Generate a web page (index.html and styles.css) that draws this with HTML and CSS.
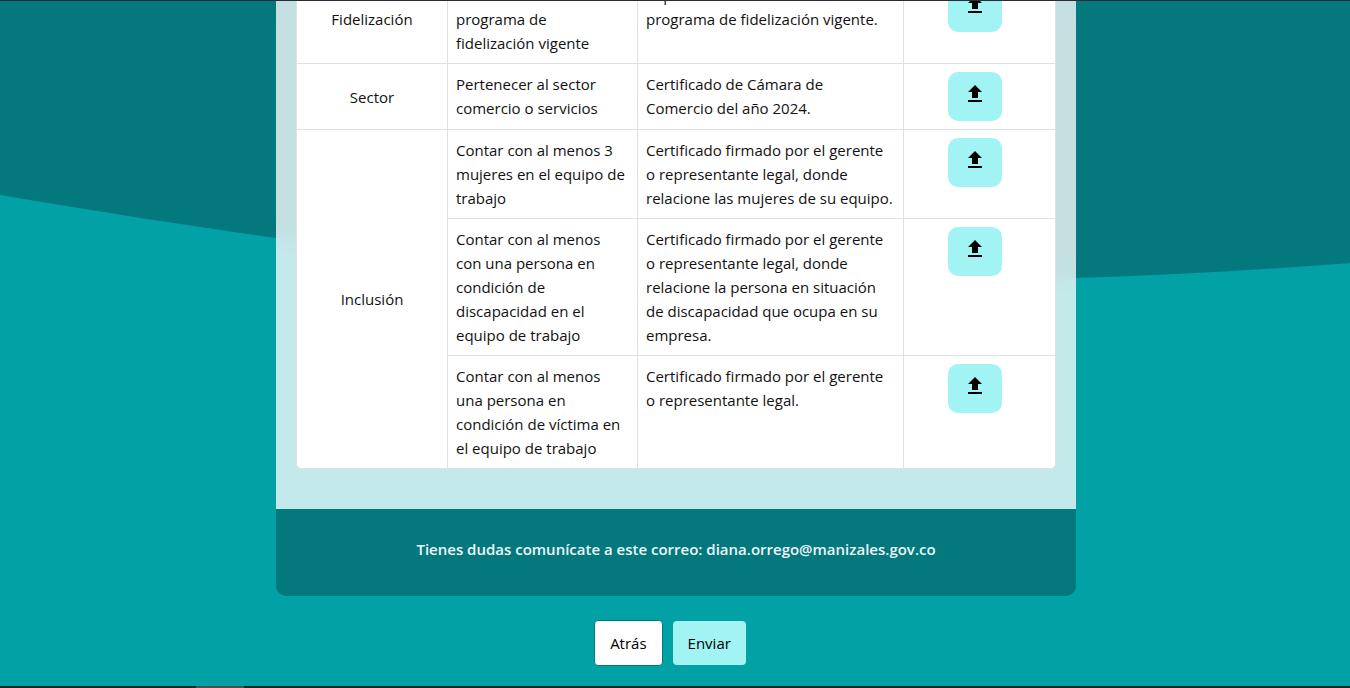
FILE: index.html
```html
<!DOCTYPE html>
<html lang="es">
<head>
<meta charset="utf-8">
<meta name="viewport" content="width=device-width, initial-scale=1">
<title>Requisitos</title>
<link rel="stylesheet" href="styles.css">
</head>
<body>
<svg class="wave" viewBox="0 0 1350 300" preserveAspectRatio="none" aria-hidden="true">
  <path fill="#03787d" d="M0 0H1350V263C1260 270 1170 275 1076 278C860 290 560 281 276 238C190 226 100 212 0 195Z"/>
</svg>
<svg class="defs" aria-hidden="true">
  <symbol id="upload" viewBox="0 0 24 24"><path d="M5 20h14v-2H5v2zm0-4zM9 16h6v-6h4l-7-7-7 7h4z"/></symbol>
</svg>
<main class="view">
  <form class="form">
    <section class="card">
      <div class="card-body">
        <div class="table-frame">
          <table class="reqs">
            <colgroup><col class="c-name"><col class="c-req"><col class="c-doc"><col class="c-file"></colgroup>
            <tbody>
              <tr>
                <th scope="row">Fidelización</th>
                <td>Contar con un<br>programa de<br>fidelización vigente</td>
                <td>Soporte del<br>programa de fidelización vigente.</td>
                <td class="file"><button type="button" class="upload" aria-label="Subir archivo"><svg class="icon"><use href="#upload"/></svg></button></td>
              </tr>
              <tr>
                <th scope="row">Sector</th>
                <td>Pertenecer al sector<br>comercio o servicios</td>
                <td>Certificado de Cámara de<br>Comercio del año 2024.</td>
                <td class="file"><button type="button" class="upload" aria-label="Subir archivo"><svg class="icon"><use href="#upload"/></svg></button></td>
              </tr>
              <tr>
                <th scope="rowgroup" rowspan="3">Inclusión</th>
                <td>Contar con al menos 3<br>mujeres en el equipo de<br>trabajo</td>
                <td>Certificado firmado por el gerente<br>o representante legal, donde<br>relacione las mujeres de su equipo.</td>
                <td class="file"><button type="button" class="upload" aria-label="Subir archivo"><svg class="icon"><use href="#upload"/></svg></button></td>
              </tr>
              <tr>
                <td>Contar con al menos<br>con una persona en<br>condición de<br>discapacidad en el<br>equipo de trabajo</td>
                <td>Certificado firmado por el gerente<br>o representante legal, donde<br>relacione la persona en situación<br>de discapacidad que ocupa en su<br>empresa.</td>
                <td class="file"><button type="button" class="upload" aria-label="Subir archivo"><svg class="icon"><use href="#upload"/></svg></button></td>
              </tr>
              <tr>
                <td>Contar con al menos<br>una persona en<br>condición de víctima en<br>el equipo de trabajo</td>
                <td>Certificado firmado por el gerente<br>o representante legal.</td>
                <td class="file"><button type="button" class="upload" aria-label="Subir archivo"><svg class="icon"><use href="#upload"/></svg></button></td>
              </tr>
            </tbody>
          </table>
        </div>
      </div>
      <footer class="card-foot">Tienes dudas comunícate a este correo: diana.orrego@manizales.gov.co</footer>
    </section>
    <div class="actions">
      <button type="button" class="btn btn-back">Atrás</button>
      <button type="submit" class="btn btn-send">Enviar</button>
    </div>
  </form>
</main>
<div class="bar"><div class="bar-thumb"></div></div>
</body>
</html>
```
FILE: styles.css
```css
* { box-sizing: border-box; }

body {
  margin: 0;
  height: 100vh;
  display: flex;
  flex-direction: column;
  overflow: hidden;
  border-top: 1px solid #2b2b33;
  background: #02a1a6;
  color: #111;
  font: 15px/24px "Segoe UI", "Open Sans", "Noto Sans", sans-serif;
}

.wave {
  position: absolute;
  top: 0;
  left: 0;
  z-index: -1;
  width: 100%;
  height: 300px;
}

.defs {
  position: absolute;
  width: 0;
  height: 0;
}

/* The view rests at the end of the form */
.view {
  flex: 1;
  min-height: 0;
  display: flex;
  flex-direction: column;
  justify-content: flex-end;
  align-items: center;
  overflow: hidden;
}

.form {
  flex: none;
  width: 100%;
  max-width: 800px;
  margin-left: 2px;
  padding-bottom: 20px;
}

.card {
  overflow: hidden;
  border-radius: 0 0 10px 10px;
}

.card-body {
  padding: 0 20px 40px;
  background: rgba(255, 255, 255, 0.77);
  backdrop-filter: blur(10px);
}

.table-frame {
  overflow: hidden;
  border: 1px solid #dee2e6;
  border-radius: 0 0 5px 5px;
  background: #fff;
}

.reqs {
  width: 100%;
  table-layout: fixed;
  border-collapse: separate;
  border-spacing: 0;
}

.c-name { width: 151px; }
.c-req { width: 190px; }
.c-doc { width: 266px; }

.reqs th,
.reqs td {
  padding: 8px;
  border-right: 1px solid #dee2e6;
  border-bottom: 1px solid #dee2e6;
  font-weight: 400;
  text-align: left;
  vertical-align: top;
  white-space: nowrap;
}

.reqs th {
  text-align: center;
  vertical-align: middle;
}

.reqs tr > :last-child { border-right: 0; }
.reqs tr:last-child > *,
.reqs th[rowspan] { border-bottom: 0; }

.reqs .file {
  padding-right: 18px;
  text-align: center;
}

.upload {
  display: block;
  width: 54px;
  height: 49px;
  margin: 0 auto;
  padding: 10px 15px 15px;
  border: 0;
  border-radius: 10px;
  background: #a2f4f4;
  cursor: pointer;
}

.icon {
  display: block;
  width: 24px;
  height: 24px;
}

.card-foot {
  padding: 28px 20px 35px;
  background: #03787d;
  color: #eef6fa;
  font-weight: 600;
  text-align: center;
}

.actions {
  display: flex;
  justify-content: center;
  align-items: center;
  gap: 10px;
  margin-top: 24px;
  margin-right: 12px;
}

.btn {
  padding: 10px 15px;
  border: 0;
  border-radius: 4px;
  color: #000;
  font: inherit;
  cursor: pointer;
}

.btn-back {
  border: 1px solid #03787d;
  background: #fff;
}

.btn-send { background: #a2f4f4; }

.bar {
  flex: none;
  height: 2px;
  padding-left: 196px;
  background: #1c2529;
}

.bar-thumb {
  width: 48px;
  height: 2px;
  background: #4c4f52;
}
```
